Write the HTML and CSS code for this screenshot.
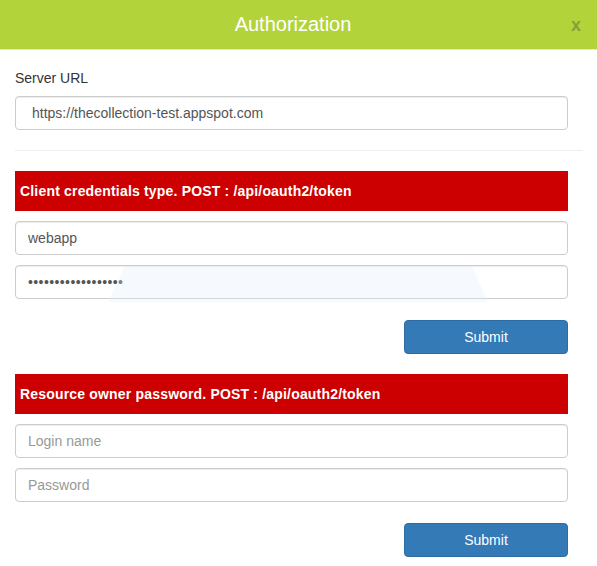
FILE: index.html
```html
<!DOCTYPE html>
<html>
<head>
<meta charset="utf-8">
<title>Authorization</title>
<link rel="stylesheet" href="styles.css">
</head>
<body>
<div class="modal">
  <header class="modal-header">
    <h1 class="modal-title">Authorization</h1>
    <span class="close">x</span>
  </header>
  <main class="modal-body">
    <label class="field-label">Server URL</label>
    <input class="form-control url" type="text" value="https://thecollection-test.appspot.com">
    <hr class="divider">

    <section class="block">
      <div class="bar">Client credentials type. POST : /api/oauth2/token</div>
      <input class="form-control" type="text" value="webapp">
      <div class="overlay-wrap">
        <input class="form-control secret" type="password" value="xxxxxxxxxxxxxxxxxx">
        <div class="glare"></div>
      </div>
      <div class="actions"><button class="btn">Submit</button></div>
    </section>

    <section class="block second">
      <div class="bar">Resource owner password. POST : /api/oauth2/token</div>
      <input class="form-control" type="text" placeholder="Login name">
      <input class="form-control" type="password" placeholder="Password">
      <div class="actions"><button class="btn">Submit</button></div>
    </section>
  </main>
</div>
</body>
</html>
```

FILE: styles.css
```css
* { box-sizing: border-box; }
html, body { margin: 0; padding: 0; background: #fff; }
body {
  font-family: "Liberation Sans", Arial, sans-serif;
  font-size: 14px;
  color: #333;
  width: 597px;
}
.modal-header {
  position: relative;
  height: 50px;
  background: #b3d33b;
  border-bottom: 1px solid #e5e5e5;
}
.modal-title {
  margin: 0;
  font-weight: normal;
  font-size: 20px;
  line-height: 49px;
  color: #fff;
  text-align: center;
  padding-right: 11px;
}
.close {
  position: absolute;
  right: 16px;
  top: 1px;
  line-height: 49px;
  font-size: 18px;
  font-weight: bold;
  color: #86a236;
}
.modal-body {
  padding: 18px 14px 0 15px;
  display: flex;
  flex-direction: column;
}
.field-label {
  display: block;
  line-height: 20px;
  margin-bottom: 8px;
  color: #333;
}
.form-control {
  display: block;
  width: 553px;
  height: 34px;
  padding: 6px 12px;
  font-family: "Liberation Sans", Arial, sans-serif;
  font-size: 14px;
  line-height: 20px;
  color: #555;
  background: #fff;
  border: 1px solid #ccc;
  border-radius: 4px;
  box-shadow: inset 0 1px 1px rgba(0,0,0,0.075);
  outline: none;
}
.form-control::placeholder { color: #999; }
.form-control.url { padding-left: 16px; }
.form-control.secret { letter-spacing: 0.4px; }
.divider {
  margin: 20px 0 20px 0;
  border: 0;
  border-top: 1px solid #eee;
  width: 568px;
  height: 0;
}
.block {
  display: flex;
  flex-direction: column;
  gap: 10px;
}
.block.second { margin-top: 20px; }
.bar {
  width: 553px;
  height: 40px;
  line-height: 40px;
  background: #cc0000;
  color: #fff;
  font-weight: bold;
  letter-spacing: 0.18px;
  padding-left: 5px;
}
.overlay-wrap { position: relative; }
.glare {
  position: absolute;
  left: 93px;
  top: 1px;
  width: 380px;
  height: 36px;
  background: rgba(225, 240, 252, 0.3);
  clip-path: polygon(17px 0, 364px 0, 380px 100%, 0 100%);
  pointer-events: none;
}
.actions {
  display: flex;
  justify-content: flex-end;
  width: 553px;
  margin-top: 11px;
}
.btn {
  width: 164px;
  height: 34px;
  font-family: "Liberation Sans", Arial, sans-serif;
  font-size: 14px;
  color: #fff;
  background: #337ab7;
  border: 1px solid #2e6da4;
  border-radius: 4px;
  padding: 6px 12px;
}
```
